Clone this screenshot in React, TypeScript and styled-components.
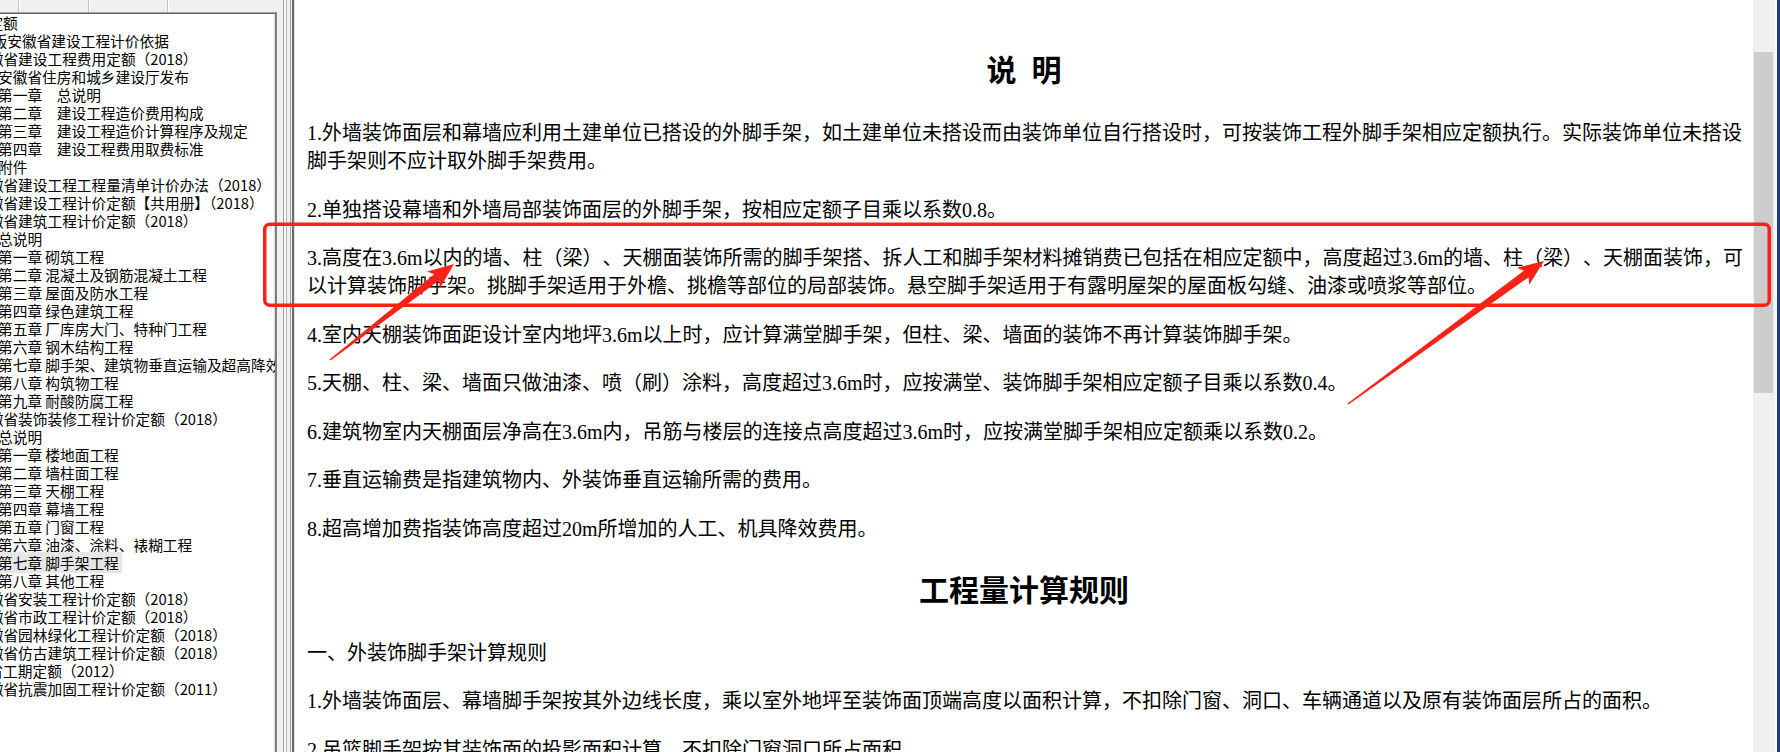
import React from "react";
import styled, { createGlobalStyle } from "styled-components";

const Global = createGlobalStyle`
  html, body { margin: 0; padding: 0; background: #f0f0f0; overflow: hidden; }
  #root { width: 1780px; height: 752px; }
`;

const Page = styled.div`
  position: relative;
  display: flex;
  width: 1780px;
  height: 752px;
  overflow: hidden;
  background: #f0f0f0;
`;

const LeftPane = styled.div`
  width: 277px;
  flex: none;
  display: flex;
  flex-direction: column;
`;

const HeaderStrip = styled.div`
  height: 12px;
  flex: none;
  display: flex;
  background: #f0f0f0;
`;

const HeaderCell = styled.div<{ $w?: number }>`
  ${(p) => (p.$w ? `width:${p.$w}px; flex:none;` : "flex:1;")}
  border-right: 1px solid #c4c4c4;
  box-shadow: 1px 0 0 #ffffff;
  &:last-child { border-right: none; box-shadow: none; }
`;

const TreeBox = styled.div`
  flex: 1;
  background: #ffffff;
  border-top: 1px solid #a0a0a0;
  border-right: 2px solid #7f7f7f;
  box-shadow: inset 0 1px 0 #696969, inset -1px 0 0 #d8d8d8;
  padding-top: 1px;
  overflow: hidden;
  font-family: "Noto Sans CJK SC", sans-serif;
  font-size: 14.7px;
  line-height: 18px;
  color: #000;
`;

const TreeRow = styled.div<{ $x: number }>`
  height: 18px;
  white-space: nowrap;
  text-indent: ${(p) => p.$x}px;
`;

const Selected = styled.span`
  background: #e6e6e6;
  padding-right: 3px;
`;

const Splitter = styled.div`
  width: 18px;
  flex: none;
  background: linear-gradient(
    to right,
    #f0f0f0 0 6px,
    #a0a0a0 6px 7px,
    #f8f8f8 7px 9px,
    #b4b4b4 9px 10px,
    #f0f0f0 10px 13px,
    #a0a0a0 13px 14px,
    #f0f0f0 14px 15px,
    #6e6e6e 15px 17px,
    #e0e0e0 17px 18px
  );
`;

const Main = styled.main`
  flex: none;
  width: 1458px;
  box-sizing: border-box;
  background: #ffffff;
  padding: 23px 1px 0 12px;
  overflow: hidden;
  font-family: "Liberation Serif", "Noto Sans CJK SC", serif;
  font-size: 20px;
  line-height: 28px;
  color: #000;
  text-spacing-trim: space-all;
`;

const Title = styled.h2`
  margin: 28px 0;
  padding-right: 11px;
  font-size: 30px;
  line-height: 40px;
  font-weight: 700;
  text-align: center;
`;

const Para = styled.p`
  margin: 0 0 20.5px;
`;

const Scrollbar = styled.div`
  width: 22px;
  flex: none;
  box-sizing: border-box;
  padding-top: 52px;
  background: #f0f0f0;
`;

const Thumb = styled.div`
  margin-left: 1px;
  width: 19px;
  height: 341px;
  background: #cdcdcd;
`;

const EdgeGap = styled.div`
  width: 2px;
  flex: none;
  background: #fafafa;
`;

const BlueEdge = styled.div`
  width: 3px;
  flex: none;
  background: #1a3c8e;
`;

const Overlay = styled.svg`
  position: absolute;
  left: 0;
  top: 0;
  pointer-events: none;
`;

type Row = { t: string; x: number; sel?: boolean };

const tree: Row[] = [
  { t: "计价定额", x: -41 },
  { t: "2018版安徽省建设工程计价依据", x: -40 },
  { t: "安徽省建设工程费用定额（2018）", x: -26 },
  { t: "安徽省住房和城乡建设厅发布", x: -2 },
  { t: "第一章　总说明", x: -2 },
  { t: "第二章　建设工程造价费用构成", x: -2 },
  { t: "第三章　建设工程造价计算程序及规定", x: -2 },
  { t: "第四章　建设工程费用取费标准", x: -2 },
  { t: "附件", x: -2 },
  { t: "安徽省建设工程工程量清单计价办法（2018）", x: -26 },
  { t: "安徽省建设工程计价定额【共用册】（2018）", x: -26 },
  { t: "安徽省建筑工程计价定额（2018）", x: -26 },
  { t: "总说明", x: -2 },
  { t: "第一章 砌筑工程", x: -2 },
  { t: "第二章 混凝土及钢筋混凝土工程", x: -2 },
  { t: "第三章 屋面及防水工程", x: -2 },
  { t: "第四章 绿色建筑工程", x: -2 },
  { t: "第五章 厂库房大门、特种门工程", x: -2 },
  { t: "第六章 钢木结构工程", x: -2 },
  { t: "第七章 脚手架、建筑物垂直运输及超高降效", x: -2 },
  { t: "第八章 构筑物工程", x: -2 },
  { t: "第九章 耐酸防腐工程", x: -2 },
  { t: "安徽省装饰装修工程计价定额（2018）", x: -26 },
  { t: "总说明", x: -2 },
  { t: "第一章 楼地面工程", x: -2 },
  { t: "第二章 墙柱面工程", x: -2 },
  { t: "第三章 天棚工程", x: -2 },
  { t: "第四章 幕墙工程", x: -2 },
  { t: "第五章 门窗工程", x: -2 },
  { t: "第六章 油漆、涂料、裱糊工程", x: -2 },
  { t: "第七章 脚手架工程", x: -2, sel: true },
  { t: "第八章 其他工程", x: -2 },
  { t: "安徽省安装工程计价定额（2018）", x: -26 },
  { t: "安徽省市政工程计价定额（2018）", x: -26 },
  { t: "安徽省园林绿化工程计价定额（2018）", x: -26 },
  { t: "安徽省仿古建筑工程计价定额（2018）", x: -26 },
  { t: "安徽省工期定额（2012）", x: -41 },
  { t: "安徽省抗震加固工程计价定额（2011）", x: -26 },
];

const paras1 = [
  "1.外墙装饰面层和幕墙应利用土建单位已搭设的外脚手架，如土建单位未搭设而由装饰单位自行搭设时，可按装饰工程外脚手架相应定额执行。实际装饰单位未搭设脚手架则不应计取外脚手架费用。",
  "2.单独搭设幕墙和外墙局部装饰面层的外脚手架，按相应定额子目乘以系数0.8。",
  "3.高度在3.6m以内的墙、柱（梁）、天棚面装饰所需的脚手架搭、拆人工和脚手架材料摊销费已包括在相应定额中，高度超过3.6m的墙、柱（梁）、天棚面装饰，可以计算装饰脚手架。挑脚手架适用于外檐、挑檐等部位的局部装饰。悬空脚手架适用于有露明屋架的屋面板勾缝、油漆或喷浆等部位。",
  "4.室内天棚装饰面距设计室内地坪3.6m以上时，应计算满堂脚手架，但柱、梁、墙面的装饰不再计算装饰脚手架。",
  "5.天棚、柱、梁、墙面只做油漆、喷（刷）涂料，高度超过3.6m时，应按满堂、装饰脚手架相应定额子目乘以系数0.4。",
  "6.建筑物室内天棚面层净高在3.6m内，吊筋与楼层的连接点高度超过3.6m时，应按满堂脚手架相应定额乘以系数0.2。",
  "7.垂直运输费是指建筑物内、外装饰垂直运输所需的费用。",
  "8.超高增加费指装饰高度超过20m所增加的人工、机具降效费用。",
];

const paras2 = [
  "一、外装饰脚手架计算规则",
  "1.外墙装饰面层、幕墙脚手架按其外边线长度，乘以室外地坪至装饰面顶端高度以面积计算，不扣除门窗、洞口、车辆通道以及原有装饰面层所占的面积。",
  "2.吊篮脚手架按其装饰面的投影面积计算，不扣除门窗洞口所占面积。",
];

function arrowPoints(tx: number, ty: number, px: number, py: number): string {
  const dx = px - tx;
  const dy = py - ty;
  const L = Math.hypot(dx, dy);
  const ux = dx / L;
  const uy = dy / L;
  const nx = -uy;
  const ny = ux;
  const h = 22;
  const hw = 10.5;
  const sw = 4;
  const tw = 0.8;
  const bx = px - ux * h;
  const by = py - uy * h;
  const cx = bx - ux * 4;
  const cy = by - uy * 4;
  const pts: [number, number][] = [
    [tx + nx * tw, ty + ny * tw],
    [bx + nx * sw, by + ny * sw],
    [cx + nx * hw, cy + ny * hw],
    [px, py],
    [cx - nx * hw, cy - ny * hw],
    [bx - nx * sw, by - ny * sw],
    [tx - nx * tw, ty - ny * tw],
  ];
  return pts.map(([a, b]) => `${a.toFixed(1)},${b.toFixed(1)}`).join(" ");
}

export default function App() {
  return (
    <>
      <Global />
      <Page>
        <LeftPane>
          <HeaderStrip>
            <HeaderCell $w={18} />
            <HeaderCell $w={69} />
            <HeaderCell $w={78} />
            <HeaderCell />
          </HeaderStrip>
          <TreeBox>
            {tree.map((r, i) => (
              <TreeRow key={i} $x={r.x}>
                {r.sel ? <Selected>{r.t}</Selected> : r.t}
              </TreeRow>
            ))}
          </TreeBox>
        </LeftPane>
        <Splitter />
        <Main>
          <Title>说{"\u2002"}明</Title>
          {paras1.map((p, i) => (
            <Para key={i}>{p}</Para>
          ))}
          <Title>工程量计算规则</Title>
          {paras2.map((p, i) => (
            <Para key={i}>{p}</Para>
          ))}
        </Main>
        <Scrollbar>
          <Thumb />
        </Scrollbar>
        <EdgeGap />
        <BlueEdge />
        <Overlay width={1780} height={752} viewBox="0 0 1780 752">
          <rect
            x={264.75}
            y={224.25}
            width={1504.5}
            height={81}
            rx={5}
            ry={5}
            fill="none"
            stroke="#fa2216"
            strokeWidth={3.5}
          />
          <polygon points={arrowPoints(330, 360, 454, 264)} fill="#fa2216" />
          <polygon points={arrowPoints(1348, 404, 1544, 261)} fill="#fa2216" />
        </Overlay>
      </Page>
    </>
  );
}
